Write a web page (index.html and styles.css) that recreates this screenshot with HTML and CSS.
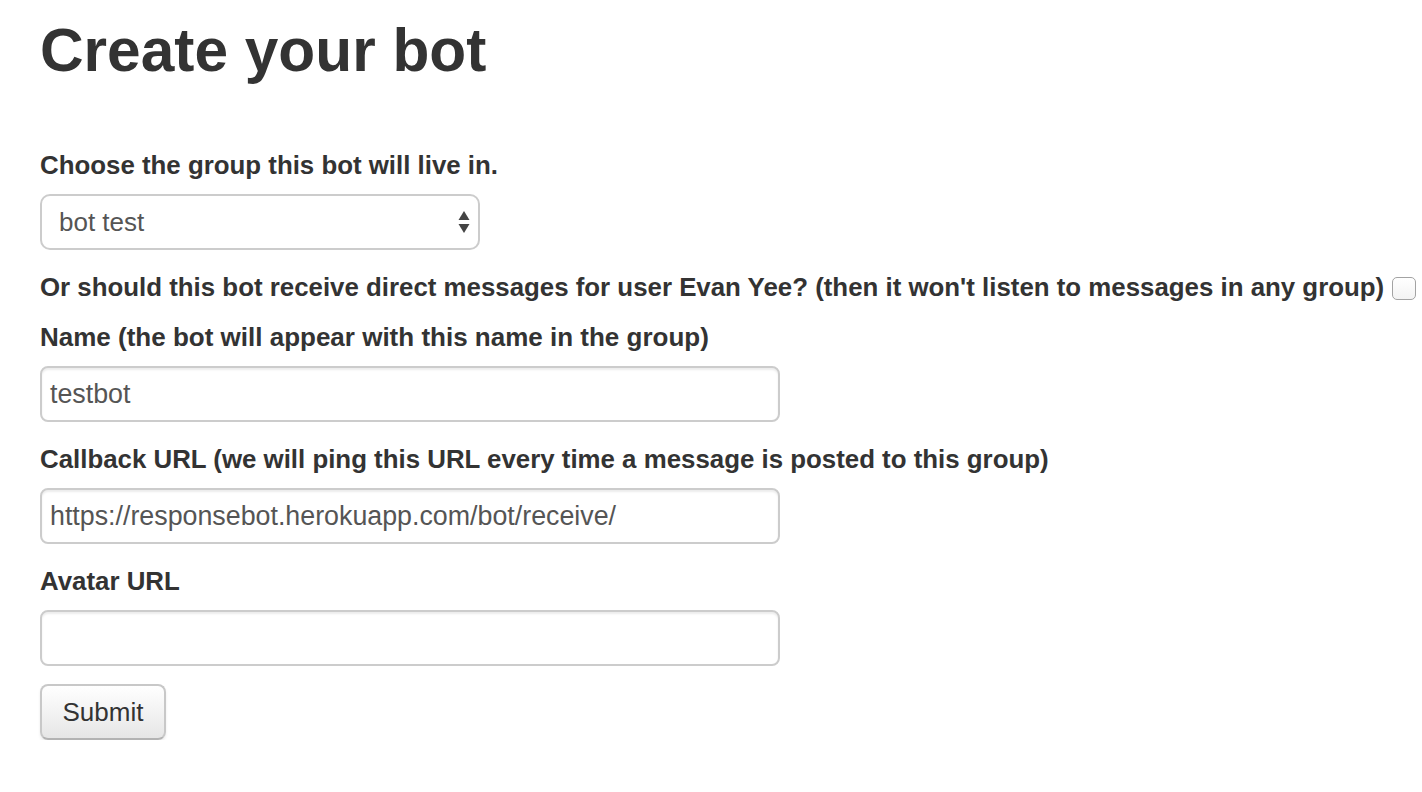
FILE: index.html
```html
<!DOCTYPE html>
<html>
<head>
<meta charset="utf-8">
<title>Create your bot</title>
<link rel="stylesheet" href="styles.css">
</head>
<body>
<div class="page">
  <h1 class="title">Create your bot</h1>
  <form class="form">
    <label class="label">Choose the group this bot will live in.</label>
    <div class="select-wrap">
      <div class="select">bot test</div>
      <svg class="select-arrows" width="12" height="24" viewBox="0 0 12 24"><path d="M6 1 L11.5 10 H0.5 Z" fill="#444"/><path d="M0.5 14 H11.5 L6 23 Z" fill="#444"/></svg>
    </div>
    <label class="label label-dm">Or should this bot receive direct messages for user Evan Yee? (then it won't listen to messages in any group) <span class="checkbox"></span></label>
    <label class="label label-name">Name (the bot will appear with this name in the group)</label>
    <div class="input">testbot</div>
    <label class="label">Callback URL (we will ping this URL every time a message is posted to this group)</label>
    <div class="input">https://responsebot.herokuapp.com/bot/receive/</div>
    <label class="label">Avatar URL</label>
    <div class="input input-last"></div>
    <div class="button">Submit</div>
  </form>
</div>
</body>
</html>
```
FILE: styles.css
```css
html, body {
  margin: 0;
  padding: 0;
  background: #fff;
}
body {
  font-family: "Liberation Sans", Arial, Helvetica, sans-serif;
  color: #333;
}
.page {
  padding: 0 0 0 40px;
  overflow: hidden;
}
.title {
  margin: 14px 0 0 0;
  font-size: 60.4px;
  line-height: 72px;
  font-weight: bold;
  color: #333;
}
.form {
  margin-top: 61px;
  display: flex;
  flex-direction: column;
  align-items: flex-start;
}
.label {
  display: block;
  font-size: 25.85px;
  font-weight: bold;
  line-height: 36px;
  margin-bottom: 11px;
  white-space: nowrap;
}
.label-name {
  font-size: 26px;
}
.label-dm {
  margin-top: -1px;
  margin-bottom: 14px;
}
.select-wrap {
  position: relative;
  width: 440px;
  height: 56px;
  margin-bottom: 20px;
}
.select {
  box-sizing: border-box;
  width: 440px;
  height: 56px;
  border: 2px solid #ccc;
  border-radius: 10px;
  padding-left: 17px;
  font-size: 26px;
  line-height: 52px;
  color: #555;
  background: #fff;
}
.select-arrows {
  position: absolute;
  right: 10px;
  top: 16px;
}
.checkbox {
  display: inline-block;
  box-sizing: border-box;
  width: 24px;
  height: 23px;
  border: 1.5px solid #a3a3a3;
  border-radius: 5px;
  background: linear-gradient(#fff, #f3f3f3);
  vertical-align: -4px;
  margin-left: 1px;
}
.input {
  box-sizing: border-box;
  width: 740px;
  height: 56px;
  border: 2px solid #ccc;
  border-radius: 8px;
  box-shadow: inset 0 2px 2px rgba(0,0,0,0.075);
  padding-left: 8px;
  font-size: 26.8px;
  line-height: 52px;
  color: #555;
  background: #fff;
  margin-bottom: 19px;
}
.input-last {
  margin-bottom: 18px;
}
.button {
  box-sizing: border-box;
  width: 126px;
  height: 56px;
  border: 2px solid #c8c8c8;
  border-bottom-color: #b3b3b3;
  border-radius: 8px;
  background: linear-gradient(#ffffff, #e6e6e6);
  box-shadow: inset 0 2px 0 rgba(255,255,255,0.2), 0 2px 3px rgba(0,0,0,0.08);
  font-size: 26px;
  line-height: 52px;
  text-align: center;
  color: #333;
}
```
